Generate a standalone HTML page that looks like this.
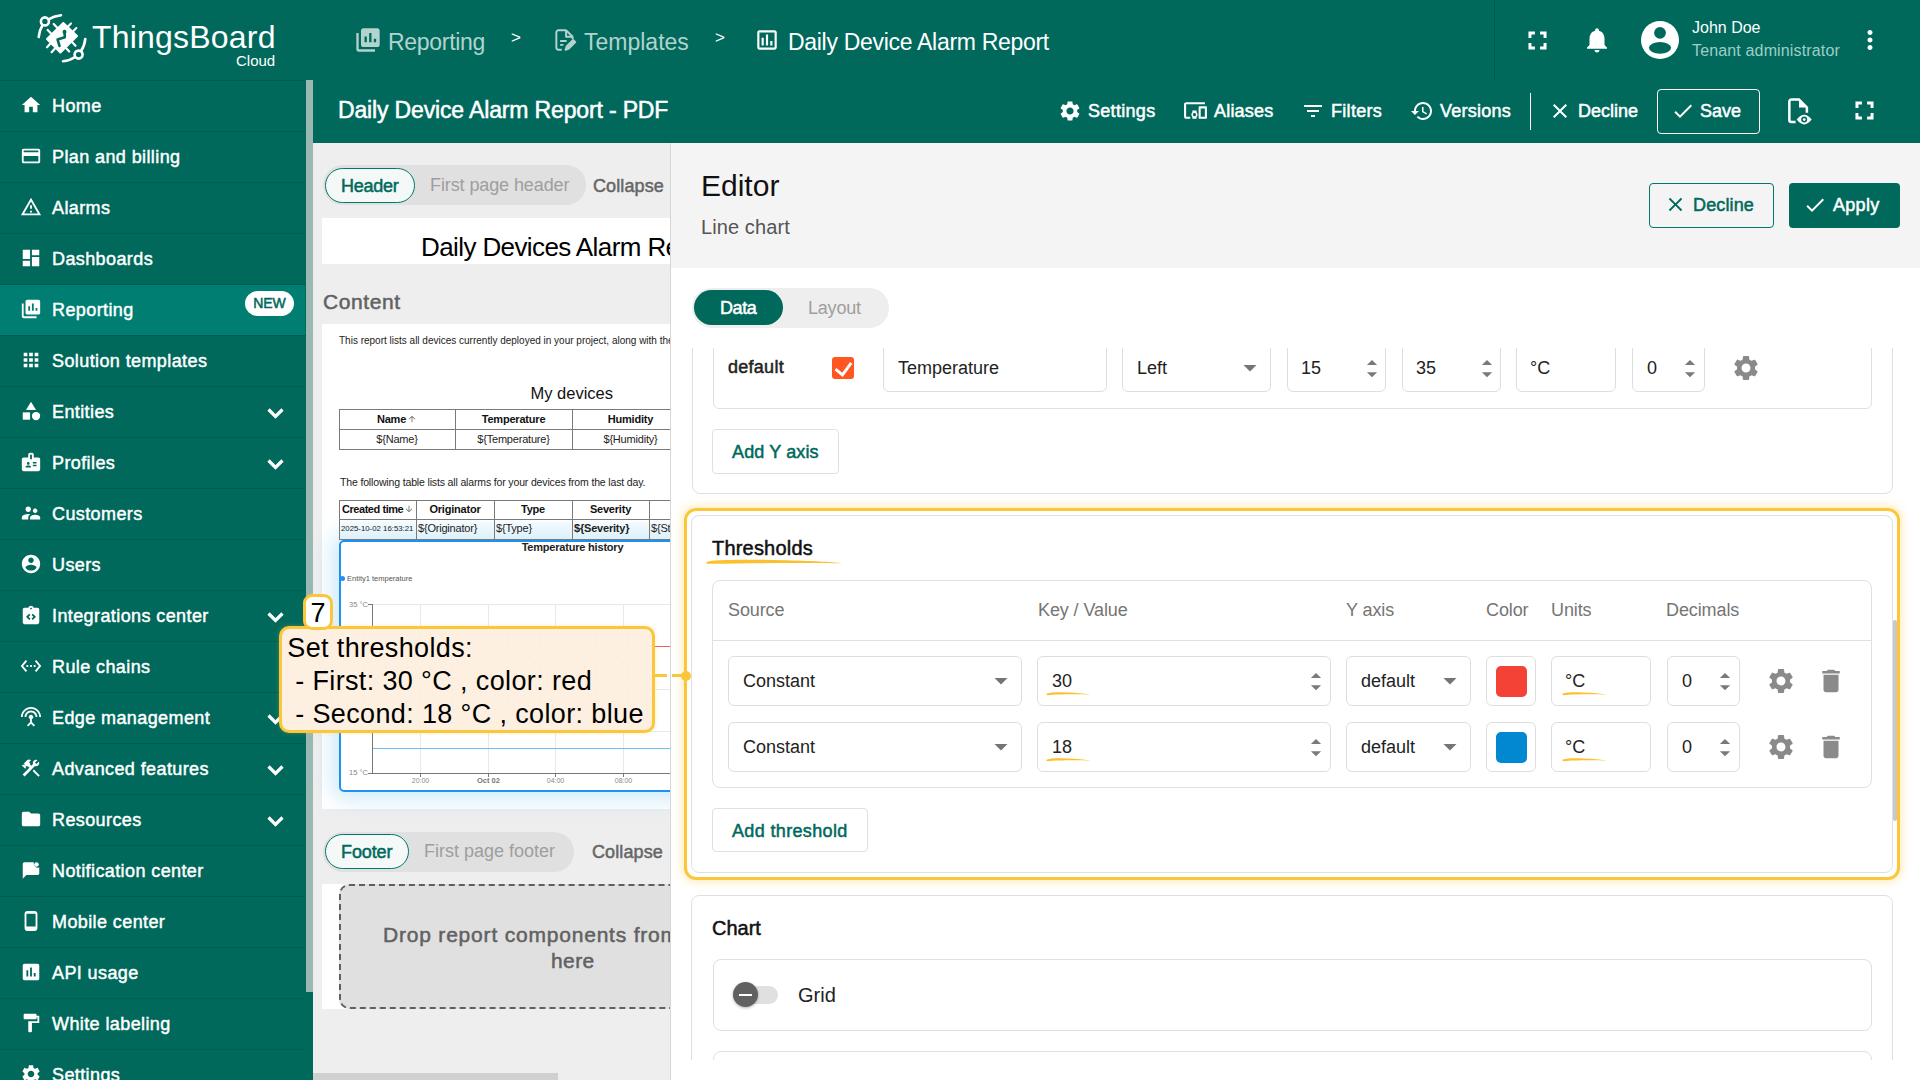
<!DOCTYPE html>
<html><head><meta charset="utf-8">
<style>
*{box-sizing:border-box;margin:0;padding:0}
html,body{width:1920px;height:1080px;overflow:hidden;background:#fff;font-family:"Liberation Sans",sans-serif}
.a{position:absolute}
.t{position:absolute;white-space:nowrap;line-height:1}
svg{position:absolute;display:block}
#top{left:0;top:0;width:1920px;height:143px;background:#00695c}
#side{left:0;top:0;width:313px;height:1080px;overflow:hidden}
#sidebg{left:0;top:80px;width:313px;height:1000px;background:#00695c}
.si{position:absolute;left:0;width:305px;height:51px;border-top:1px solid #005b50}
.si .t{left:52px;top:16px;font-size:18px;color:#fff;letter-spacing:0.4px;-webkit-text-stroke:0.45px currentColor;}
.si svg{left:20px;top:13px;width:22px;height:22px;fill:#fff}
.si .chev{left:264px;top:13px;width:24px;height:24px}
.w{fill:#fff}
.th{font-size:11px;font-weight:700;color:#111;text-align:center;letter-spacing:-0.2px}
.td{font-size:11px;color:#222;text-align:center;letter-spacing:-0.2px}
.card{position:absolute;border:1px solid #e0e0e0}
.inp{position:absolute;border:1.5px solid #dedede;border-radius:6px}
.b2{top:102px;font-size:18px;color:#fff;-webkit-text-stroke:0.5px currentColor;}
</style></head><body>
<!-- TOP BAR -->
<div id="top" class="a"></div>
<div class="a" style="left:1494px;top:0;width:1px;height:80px;background:#005a4f"></div>

<!-- logo -->
<svg style="left:36px;top:13px;width:52px;height:50px" viewBox="0 0 52 50" fill="none" stroke="#fff" stroke-width="2.6" stroke-linecap="round">
  <circle cx="8.9" cy="8.4" r="4"/>
  <path d="M12.5 6.3 Q17.5 3.2 25 2.2"/>
  <path d="M6.6 12 Q3.4 17 2.7 24"/>
  <circle cx="42.6" cy="41.6" r="4"/>
  <path d="M39 44 Q34 47.5 27 48.3"/>
  <path d="M45 38 Q48.5 33 49.3 26"/>
  <path d="M27.3 10 L41 23 L24.4 39.5 L11 26 Z" fill="#fff" stroke-width="2" stroke-linejoin="round"/>
  <path d="M17.7 11L21 14.5M11.7 17L15 20.5M35 10.5L31.5 14M40.3 15.1L36.5 19M39.5 32.8L36 29M33.2 38.5L30 35M11 34.3L14.5 30.5M15.6 39.2L19 35.5" stroke-width="2.2"/>
  <path d="M28.6 18 L28.8 24.3 L21.6 26.6 L23.5 33" stroke="#00695c" stroke-width="2.6" stroke-linejoin="round"/>
  <circle cx="28.5" cy="19" r="2" fill="#00695c" stroke="none"/>
</svg>
<div class="t" style="left:92px;top:21px;font-size:32px;color:#fff;letter-spacing:0.2px">ThingsBoard</div>
<div class="t" style="left:236px;top:53px;font-size:15px;color:#fff;">Cloud</div>

<!-- breadcrumb -->
<svg style="left:354px;top:26px;width:28px;height:28px" viewBox="0 0 24 24"><path fill="#b2d3ce" d="M4 6H2v14c0 1.1.9 2 2 2h14v-2H4V6zm16-4H8c-1.1 0-2 .9-2 2v12c0 1.1.9 2 2 2h12c1.1 0 2-.9 2-2V4c0-1.1-.9-2-2-2zm-9 12H9V9h2v5zm4 0h-2V6h2v8zm4 0h-2v-3h2v3z"/></svg>
<div class="t" style="left:388px;top:31px;font-size:23px;color:#b2d3ce;letter-spacing:-0.3px">Reporting</div>
<div class="t" style="left:511px;top:29px;font-size:17px;color:#fff;">&gt;</div>
<svg style="left:552px;top:27px;width:26px;height:26px" viewBox="0 0 24 24" fill="none" stroke="#b2d3ce" stroke-width="1.8" stroke-linejoin="round"><path d="M13 3H6a2 2 0 0 0-2 2v14a2 2 0 0 0 2 2h3"/><path d="M13 3l6 6v2"/><path d="M13 3v6h6"/><path d="M7.5 13h6M7.5 16.5h3"/><path d="M12.5 21l1-3 6-6 2 2-6 6z" fill="#b2d3ce"/></svg>
<div class="t" style="left:584px;top:31px;font-size:23px;color:#b2d3ce;">Templates</div>
<div class="t" style="left:715px;top:29px;font-size:17px;color:#fff;">&gt;</div>
<svg style="left:754px;top:27px;width:26px;height:26px" viewBox="0 0 24 24"><path fill="#fff" d="M19 3H5c-1.1 0-2 .9-2 2v14c0 1.1.9 2 2 2h14c1.1 0 2-.9 2-2V5c0-1.1-.9-2-2-2zm0 16H5V5h14v14zM7 10h2v7H7zm4-3h2v10h-2zm4 6h2v4h-2z"/></svg>
<div class="t" style="left:788px;top:31px;font-size:23px;color:#fff;letter-spacing:-0.3px">Daily Device Alarm Report</div>

<!-- right top icons -->
<svg style="left:1522px;top:24.5px;width:31px;height:31px" viewBox="0 0 24 24"><path class="w" d="M7.3 14H5v5h5v-2.3H7.3V14zM5 10h2.3V7.3H10V5H5v5zm11.7 6.7H14V19h5v-5h-2.3v2.7zM14 5v2.3h2.7V10H19V5h-5z"/></svg>
<svg style="left:1582px;top:25px;width:30px;height:30px" viewBox="0 0 24 24"><path class="w" d="M12 22c1.1 0 2-.9 2-2h-4c0 1.1.89 2 2 2zm6-6v-5c0-3.07-1.64-5.64-4.5-6.32V4c0-.83-.67-1.5-1.5-1.5s-1.5.67-1.5 1.5v.68C7.63 5.36 6 7.92 6 11v5l-2 2v1h16v-1l-2-2z"/></svg>
<svg style="left:1641px;top:21.2px;width:38px;height:38px" viewBox="0 0 38 38"><circle cx="19" cy="19" r="19" fill="#fff"/><circle cx="19" cy="11.85" r="5.9" fill="#00695c"/><ellipse cx="19" cy="26.8" rx="11.1" ry="5.9" fill="#00695c"/></svg>
<div class="t" style="left:1692px;top:20px;font-size:16px;color:#fff;">John Doe</div>
<div class="t" style="left:1692px;top:43px;font-size:16px;color:#9fcdc6;letter-spacing:0.15px">Tenant administrator</div>
<svg style="left:1855px;top:25px;width:30px;height:30px" viewBox="0 0 24 24"><path class="w" d="M12 8c1.1 0 2-.9 2-2s-.9-2-2-2-2 .9-2 2 .9 2 2 2zm0 2c-1.1 0-2 .9-2 2s.9 2 2 2 2-.9 2-2-.9-2-2-2zm0 6c-1.1 0-2 .9-2 2s.9 2 2 2 2-.9 2-2-.9-2-2-2z"/></svg>

<!-- SECOND BAR -->
<div class="t" style="left:338px;top:99px;font-size:23px;color:#fff;letter-spacing:-0.15px;-webkit-text-stroke:0.5px currentColor;">Daily Device Alarm Report - PDF</div>


<svg style="left:1058px;top:99px;width:24px;height:24px" viewBox="0 0 24 24"><path class="w" d="M19.14 12.94c.04-.3.06-.61.06-.94 0-.32-.02-.64-.07-.94l2.03-1.58c.18-.14.23-.41.12-.61l-1.92-3.32c-.12-.22-.37-.29-.59-.22l-2.39.96c-.5-.38-1.030-.7-1.62-.94l-.36-2.54c-.04-.24-.24-.41-.48-.41h-3.84c-.24 0-.43.17-.47.41l-.36 2.54c-.59.24-1.13.57-1.62.94l-2.39-.96c-.22-.08-.47 0-.59.22L2.74 8.87c-.12.21-.08.47.12.61l2.03 1.58c-.05.3-.09.63-.09.94s.02.64.07.94l-2.03 1.58c-.18.14-.23.41-.12.61l1.92 3.32c.12.22.37.29.59.22l2.39-.96c.5.38 1.03.7 1.62.94l.36 2.54c.05.24.24.41.48.41h3.84c.24 0 .44-.17.47-.41l.36-2.54c.59-.24 1.13-.56 1.62-.94l2.39.96c.22.08.47 0 .59-.22l1.92-3.32c.12-.22.07-.47-.12-.61l-2.01-1.58zM12 15.6c-1.98 0-3.6-1.62-3.6-3.6s1.62-3.6 3.6-3.6 3.6 1.62 3.6 3.6-1.62 3.6-3.6 3.6z"/></svg>
<div class="t b2" style="left:1088px;letter-spacing:0.3px">Settings</div>
<svg style="left:1183px;top:98px;width:25px;height:25px" viewBox="0 0 24 24"><path class="w" d="M3 6h18V4H3c-1.1 0-2 .9-2 2v12c0 1.1.9 2 2 2h4v-2H3V6zm10 6H9v1.78c-.61.55-1 1.33-1 2.22s.39 1.67 1 2.22V20h4v-1.78c.61-.55 1-1.34 1-2.22s-.39-1.67-1-2.22V12zm-2 5.5c-.83 0-1.5-.67-1.5-1.5s.67-1.5 1.5-1.5 1.5.67 1.5 1.5-.67 1.5-1.5 1.5zM22 8h-6c-.5 0-1 .5-1 1v10c0 .5.5 1 1 1h6c.5 0 1-.5 1-1V9c0-.5-.5-1-1-1zm-1 10h-4v-8h4v8z"/></svg>
<div class="t b2" style="left:1214px;letter-spacing:0.2px">Aliases</div>
<svg style="left:1301px;top:99px;width:24px;height:24px" viewBox="0 0 24 24"><path class="w" d="M10 18h4v-2h-4v2zM3 6v2h18V6H3zm3 7h12v-2H6v2z"/></svg>
<div class="t b2" style="left:1331px;letter-spacing:0.3px">Filters</div>
<svg style="left:1410px;top:99px;width:24px;height:24px" viewBox="0 0 24 24"><path class="w" d="M13 3c-4.97 0-9 4.03-9 9H1l3.89 3.89.07.14L9 12H6c0-3.87 3.13-7 7-7s7 3.13 7 7-3.13 7-7 7c-1.93 0-3.68-.79-4.94-2.06l-1.42 1.42C8.27 19.99 10.51 21 13 21c4.97 0 9-4.03 9-9s-4.03-9-9-9zm-1 5v5l4.28 2.54.72-1.21-3.5-2.08V8H12z"/></svg>
<div class="t b2" style="left:1440px;letter-spacing:0.25px">Versions</div>
<div class="a" style="left:1530px;top:93px;width:1px;height:37px;background:#fff"></div>
<svg style="left:1548px;top:99px;width:24px;height:24px" viewBox="0 0 24 24"><path class="w" d="M19 6.41L17.59 5 12 10.59 6.41 5 5 6.41 10.59 12 5 17.59 6.41 19 12 13.41 17.59 19 19 17.59 13.41 12z"/></svg>
<div class="t b2" style="left:1578px;letter-spacing:0.0px">Decline</div>
<div class="a" style="left:1657px;top:89px;width:103px;height:45px;border:1.5px solid #fff;border-radius:4px"></div>
<svg style="left:1671px;top:99px;width:24px;height:24px" viewBox="0 0 24 24"><path class="w" d="M9 16.17L4.83 12l-1.42 1.42L9 19 21 7l-1.41-1.41z"/></svg>
<div class="t b2" style="left:1700px;letter-spacing:0.0px">Save</div>
<svg style="left:1784px;top:96px;width:30px;height:30px" viewBox="0 0 30 30"><path d="M11.6 26H7.35a2 2 0 0 1-2-2V5.5a2 2 0 0 1 2-2H15l7.9 7.9v5.4" fill="none" stroke="#fff" stroke-width="2.5"/><path d="M15 3.5V11.4H22.9z" fill="#fff"/><path d="M12.7 23.6Q20.2 14 27.7 23.6Q20.2 33.2 12.7 23.6z" fill="#fff"/><circle cx="20.2" cy="23.6" r="3" fill="#00695c"/><circle cx="20.2" cy="23.6" r="1.4" fill="#fff"/></svg>
<svg style="left:1849px;top:95px;width:31px;height:31px" viewBox="0 0 24 24"><path class="w" d="M7.3 14H5v5h5v-2.3H7.3V14zM5 10h2.3V7.3H10V5H5v5zm11.7 6.7H14V19h5v-5h-2.3v2.7zM14 5v2.3h2.7V10H19V5h-5z"/></svg>

<!--SIDEBAR-->
<div id="sidebg" class="a"></div>
<div id="side" class="a">
<div class="si" style="top:80px"><svg viewBox="0 0 24 24"><path d="M10 20v-6h4v6h5v-8h3L12 3 2 12h3v8z"/></svg><div class="t">Home</div></div>
<div class="si" style="top:131px"><svg viewBox="0 0 24 24"><path d="M20 4H4c-1.11 0-1.99.89-1.99 2L2 18c0 1.11.89 2 2 2h16c1.11 0 2-.89 2-2V6c0-1.11-.89-2-2-2zm0 14H4v-6h16v6zm0-10H4V6h16v2z"/></svg><div class="t">Plan and billing</div></div>
<div class="si" style="top:182px"><svg viewBox="0 0 24 24"><path d="M12 5.99L19.53 19H4.47L12 5.99M12 2L1 21h22L12 2zm1 14h-2v2h2v-2zm0-6h-2v4h2v-4z"/></svg><div class="t">Alarms</div></div>
<div class="si" style="top:233px"><svg viewBox="0 0 24 24"><path d="M3 13h8V3H3v10zm0 8h8v-6H3v6zm10 0h8V11h-8v10zm0-18v6h8V3h-8z"/></svg><div class="t">Dashboards</div></div>
<div class="si" style="top:284px;background:#007e72"><svg viewBox="0 0 24 24"><path d="M4 6H2v14c0 1.1.9 2 2 2h14v-2H4V6zm16-4H8c-1.1 0-2 .9-2 2v12c0 1.1.9 2 2 2h12c1.1 0 2-.9 2-2V4c0-1.1-.9-2-2-2zm-9 12H9V9h2v5zm4 0h-2V6h2v8zm4 0h-2v-3h2v3z"/></svg><div class="t">Reporting</div><div class="a" style="left:245px;top:6px;width:49px;height:25px;border-radius:13px;background:#fff;color:#00695c;font-size:14px;line-height:25px;text-align:center;-webkit-text-stroke:0.5px currentColor;">NEW</div></div>
<div class="si" style="top:335px"><svg viewBox="0 0 24 24"><path d="M4 8h4V4H4v4zm6 12h4v-4h-4v4zm-6 0h4v-4H4v4zm0-6h4v-4H4v4zm6 0h4v-4h-4v4zm6-10v4h4V4h-4zm-6 4h4V4h-4v4zm6 6h4v-4h-4v4zm0 6h4v-4h-4v4z"/></svg><div class="t">Solution templates</div></div>
<div class="si" style="top:386px"><svg viewBox="0 0 24 24"><path d="M12 2l-5.5 9h11z"/><circle cx="17.5" cy="17.5" r="4.5"/><path d="M3 13.5h8v8H3z"/></svg><div class="t">Entities</div><svg class="chev" viewBox="0 0 24 24"><path fill="none" stroke="#fff" stroke-width="3.2" d="M4.5 9.5l7 7 7-7"/></svg></div>
<div class="si" style="top:437px"><svg viewBox="0 0 24 24"><path d="M20 7h-5V4c0-1.1-.9-2-2-2h-2c-1.1 0-2 .9-2 2v3H4c-1.1 0-2 .9-2 2v11c0 1.1.9 2 2 2h16c1.1 0 2-.9 2-2V9c0-1.1-.9-2-2-2zM9 12c.83 0 1.5.67 1.5 1.5S9.83 15 9 15s-1.5-.67-1.5-1.5S8.17 12 9 12zm3 6H6v-.75c0-1 2-1.5 3-1.5s3 .5 3 1.5V18zm1-9h-2V4h2v5zm5 7.5h-4V15h4v1.5zm0-3h-4V12h4v1.5z"/></svg><div class="t">Profiles</div><svg class="chev" viewBox="0 0 24 24"><path fill="none" stroke="#fff" stroke-width="3.2" d="M4.5 9.5l7 7 7-7"/></svg></div>
<div class="si" style="top:488px"><svg viewBox="0 0 24 24"><path d="M16.5 12c1.38 0 2.49-1.12 2.49-2.5S17.88 7 16.5 7C15.12 7 14 8.12 14 9.5s1.12 2.5 2.5 2.5zM9 11c1.66 0 2.99-1.34 2.99-3S10.66 5 9 5C7.34 5 6 6.34 6 8s1.34 3 3 3zm7.5 3c-1.83 0-5.5.92-5.5 2.75V19h11v-2.25c0-1.83-3.67-2.75-5.5-2.75zM9 13c-2.33 0-7 1.17-7 3.5V19h7v-2.25c0-.85.33-2.34 2.37-3.47C10.5 13.1 9.66 13 9 13z"/></svg><div class="t">Customers</div></div>
<div class="si" style="top:539px"><svg viewBox="0 0 24 24"><path d="M12 2C6.48 2 2 6.48 2 12s4.48 10 10 10 10-4.48 10-10S17.52 2 12 2zm0 3c1.66 0 3 1.34 3 3s-1.34 3-3 3-3-1.34-3-3 1.34-3 3-3zm0 14.2c-2.5 0-4.71-1.28-6-3.22.03-1.99 4-3.08 6-3.08 1.99 0 5.97 1.09 6 3.08-1.29 1.94-3.5 3.22-6 3.22z"/></svg><div class="t">Users</div></div>
<div class="si" style="top:590px"><svg viewBox="0 0 24 24"><path d="M19 4h-4.18C14.4 2.84 13.3 2 12 2S9.6 2.84 9.18 4H5c-1.1 0-2 .9-2 2v14c0 1.1.9 2 2 2h14c1.1 0 2-.9 2-2V6c0-1.1-.9-2-2-2zm-7 0c.55 0 1 .45 1 1s-.45 1-1 1-1-.45-1-1 .45-1 1-1zm-2 13.4L6.6 14 10 10.6l1.4 1.4-2 2 2 2L10 17.4zm4 0L12.6 16l2-2-2-2 1.4-1.4 3.4 3.4-3.4 3.4z"/></svg><div class="t">Integrations center</div><svg class="chev" viewBox="0 0 24 24"><path fill="none" stroke="#fff" stroke-width="3.2" d="M4.5 9.5l7 7 7-7"/></svg></div>
<div class="si" style="top:641px"><svg viewBox="0 0 24 24"><path d="M7.77 6.76L6.23 5.48.82 12l5.41 6.52 1.54-1.28L3.42 12l4.35-5.24zM7 13h2v-2H7v2zm10-2h-2v2h2v-2zm-6 2h2v-2h-2v2zm6.77-7.52l-1.54 1.28L20.58 12l-4.35 5.24 1.54 1.28L23.18 12l-5.41-6.52z"/></svg><div class="t">Rule chains</div></div>
<div class="si" style="top:692px"><svg viewBox="0 0 24 24"><path d="M12 5c-3.87 0-7 3.13-7 7h2c0-2.76 2.24-5 5-5s5 2.24 5 5h2c0-3.87-3.13-7-7-7zm1 9.29c.88-.39 1.5-1.26 1.5-2.29 0-1.38-1.12-2.5-2.5-2.5S9.5 10.62 9.5 12c0 1.02.62 1.9 1.5 2.29v3.3L7.59 21 9 22.41l3-3 3 3L16.41 21 13 17.59v-3.3zM12 1C5.93 1 1 5.93 1 12h2c0-4.97 4.03-9 9-9s9 4.03 9 9h2c0-6.07-4.93-11-11-11z"/></svg><div class="t">Edge management</div><svg class="chev" viewBox="0 0 24 24"><path fill="none" stroke="#fff" stroke-width="3.2" d="M4.5 9.5l7 7 7-7"/></svg></div>
<div class="si" style="top:743px"><svg viewBox="0 0 24 24"><path d="M13.78 15.17l1.42-1.41 6.36 6.36-1.41 1.41zM17.5 10c1.93 0 3.5-1.57 3.5-3.5 0-.58-.16-1.12-.41-1.59l-2.7 2.7-1.49-1.49 2.7-2.7C18.62 3.16 18.08 3 17.5 3 15.57 3 14 4.57 14 6.5c0 .41.08.8.21 1.16l-1.85 1.85-1.78-1.78.71-.71-1.41-1.41L12 3.49c-1.17-1.17-3.07-1.17-4.24 0L4.22 7.03l1.41 1.41H2.81l-.71.71 3.54 3.54.71-.71V9.15l1.41 1.41.71-.71 1.78 1.78-7.41 7.41 2.12 2.12L16.34 9.79c.36.13.75.21 1.16.21z"/></svg><div class="t">Advanced features</div><svg class="chev" viewBox="0 0 24 24"><path fill="none" stroke="#fff" stroke-width="3.2" d="M4.5 9.5l7 7 7-7"/></svg></div>
<div class="si" style="top:794px"><svg viewBox="0 0 24 24"><path d="M10 4H4c-1.1 0-1.99.9-1.99 2L2 18c0 1.1.9 2 2 2h16c1.1 0 2-.9 2-2V8c0-1.1-.9-2-2-2h-8l-2-2z"/></svg><div class="t">Resources</div><svg class="chev" viewBox="0 0 24 24"><path fill="none" stroke="#fff" stroke-width="3.2" d="M4.5 9.5l7 7 7-7"/></svg></div>
<div class="si" style="top:845px"><svg viewBox="0 0 24 24"><path d="M18 8.5c1.38 0 2.5-1.12 2.5-2.5S19.38 3.5 18 3.5 15.5 4.62 15.5 6 16.62 8.5 18 8.5z"/><path d="M20 10.3V16c0 1.1-.9 2-2 2H6l-4 4V6c0-1.1.9-2 2-2h10.1c-.06.32-.1.66-.1 1 0 2.76 2.24 5 5 5 .36 0 .69-.04 1-.1z" transform="translate(1 -0.5)"/></svg><div class="t">Notification center</div></div>
<div class="si" style="top:896px"><svg viewBox="0 0 24 24"><path d="M16 1H8C6.34 1 5 2.34 5 4v16c0 1.66 1.34 3 3 3h8c1.66 0 3-1.34 3-3V4c0-1.66-1.34-3-3-3zm1 17H7V4h10v14z" transform="translate(0 0)"/></svg><div class="t">Mobile center</div></div>
<div class="si" style="top:947px"><svg viewBox="0 0 24 24"><path d="M19 3H5c-1.1 0-2 .9-2 2v14c0 1.1.9 2 2 2h14c1.1 0 2-.9 2-2V5c0-1.1-.9-2-2-2zM9 17H7v-7h2v7zm4 0h-2V7h2v10zm4 0h-2v-4h2v4z"/></svg><div class="t">API usage</div></div>
<div class="si" style="top:998px"><svg viewBox="0 0 24 24"><path d="M18 4V3c0-.55-.45-1-1-1H5c-.55 0-1 .45-1 1v4c0 .55.45 1 1 1h12c.55 0 1-.45 1-1V6h1v4H9v11c0 .55.45 1 1 1h2c.55 0 1-.45 1-1v-9h8V4h-3z"/></svg><div class="t">White labeling</div></div>
<div class="si" style="top:1049px"><svg viewBox="0 0 24 24"><path d="M19.14 12.94c.04-.3.06-.61.06-.94 0-.32-.02-.64-.07-.94l2.03-1.58c.18-.14.23-.41.12-.61l-1.92-3.32c-.12-.22-.37-.29-.59-.22l-2.39.96c-.5-.38-1.03-.7-1.62-.94l-.36-2.54c-.04-.24-.24-.41-.48-.41h-3.84c-.24 0-.43.17-.47.41l-.36 2.54c-.59.24-1.13.57-1.62.94l-2.39-.96c-.22-.08-.47 0-.59.22L2.74 8.87c-.12.21-.08.47.12.61l2.03 1.58c-.05.3-.09.63-.09.94s.02.64.07.94l-2.03 1.58c-.18.14-.23.41-.12.61l1.92 3.32c.12.22.37.29.59.22l2.39-.96c.5.38 1.03.7 1.62.94l.36 2.54c.05.24.24.41.48.41h3.84c.24 0 .44-.17.47-.41l.36-2.54c.59-.24 1.13-.56 1.62-.94l2.39.96c.22.08.47 0 .59-.22l1.92-3.32c.12-.22.07-.47-.12-.61l-2.01-1.58zM12 15.6c-1.98 0-3.6-1.62-3.6-3.6s1.62-3.6 3.6-3.6 3.6 1.62 3.6 3.6-1.62 3.6-3.6 3.6z"/></svg><div class="t">Settings</div></div>
<div class="a" style="left:305px;top:80px;width:8px;height:1000px;background:#00695c"></div>
<div class="a" style="left:306px;top:80px;width:7px;height:912px;background:#9bb8b3"></div>
</div>

<!--LEFTPANEL-->
<div class="a" style="left:313px;top:143px;width:358px;height:937px;background:#eeeeee"></div>
<div class="a" style="left:0;top:0;width:670px;height:1080px;overflow:hidden">
  <!-- header toggle -->
  <div class="a" style="left:323px;top:165px;width:263px;height:40px;border-radius:20px;background:#e0e0e0"></div>
  <div class="a" style="left:325px;top:168px;width:90px;height:35px;border-radius:18px;background:#f4f8f7;border:1.5px solid #00796b"></div>
  <div class="t" style="left:341px;top:177px;font-size:18px;color:#00695c;letter-spacing:-0.25px;-webkit-text-stroke:0.5px currentColor;">Header</div>
  <div class="t" style="left:430px;top:176px;font-size:18px;color:#9e9e9e;letter-spacing:-0.1px">First page header</div>
  <div class="t" style="left:593px;top:177px;font-size:18px;color:#666;letter-spacing:0.12px;-webkit-text-stroke:0.5px currentColor;">Collapse</div>
  <!-- header box -->
  <div class="a" style="left:322px;top:218px;width:500px;height:46px;background:#fff"></div>
  <div class="t" style="left:421px;top:234px;font-size:26px;color:#000;letter-spacing:-0.6px">Daily Devices Alarm Report</div>
  <div class="t" style="left:323px;top:291px;font-size:21px;color:#616161;letter-spacing:0.6px;-webkit-text-stroke:0.5px currentColor;">Content</div>
  <!-- report page -->
  <div class="a" style="left:322px;top:324px;width:500px;height:485px;background:#fff"></div>
  <div class="t" style="left:339px;top:336px;font-size:10px;color:#222;">This report lists all devices currently deployed in your project, along with their latest telemetry values.</div>
  <div class="t" style="left:530.5px;top:384.5px;font-size:16.5px;color:#111;">My devices</div>
  <div class="a" style="left:339px;top:409px;width:467px;height:41px;border:1px solid #7a7a7a"></div>
  <div class="a" style="left:339px;top:429px;width:467px;height:1px;background:#7a7a7a"></div>
  <div class="a" style="left:455px;top:409px;width:1px;height:41px;background:#7a7a7a"></div>
  <div class="a" style="left:572px;top:409px;width:1px;height:41px;background:#7a7a7a"></div>
  <div class="a" style="left:689px;top:409px;width:1px;height:41px;background:#7a7a7a"></div>
  <div class="t th" style="left:339px;top:414px;width:116px">Name<svg style="position:relative;display:inline-block;width:10px;height:10px;vertical-align:-1px;margin-left:1px" viewBox="0 0 24 24"><path fill="#707070" d="M4 12l1.41 1.41L11 7.83V20h2V7.83l5.58 5.59L20 12l-8-8-8 8z"/></svg></div>
  <div class="t th" style="left:455px;top:414px;width:117px">Temperature</div>
  <div class="t th" style="left:572px;top:414px;width:117px">Humidity</div>
  <div class="t td" style="left:339px;top:434px;width:116px">${Name}</div>
  <div class="t td" style="left:455px;top:434px;width:117px">${Temperature}</div>
  <div class="t td" style="left:572px;top:434px;width:117px">${Humidity}</div>
  <div class="t" style="left:340px;top:477px;font-size:10.5px;color:#222;letter-spacing:-0.15px">The following table lists all alarms for your devices from the last day.</div>
  <!-- glow -->
  <div class="a" style="left:339px;top:540px;width:467px;height:252px;border-radius:5px;box-shadow:0 0 22px 6px rgba(100,190,240,0.35)"></div>
  <div class="a" style="left:339px;top:500px;width:467px;height:40px;border:1px solid #7a7a7a;border-bottom:none;background:linear-gradient(#fff 0,#fff 19px,#f2fafe 22px,#d9f0fb 40px)"></div>
  <div class="a" style="left:339px;top:519px;width:467px;height:1px;background:#7a7a7a"></div>
  <div class="a" style="left:416px;top:500px;width:1px;height:40px;background:#7a7a7a"></div>
  <div class="a" style="left:494px;top:500px;width:1px;height:40px;background:#7a7a7a"></div>
  <div class="a" style="left:572px;top:500px;width:1px;height:40px;background:#7a7a7a"></div>
  <div class="a" style="left:649px;top:500px;width:1px;height:40px;background:#7a7a7a"></div>
  <div class="t th" style="left:342px;top:504px;text-align:left;letter-spacing:-0.45px">Created time<svg style="position:relative;display:inline-block;width:10px;height:10px;vertical-align:-1px;margin-left:1px" viewBox="0 0 24 24"><path fill="#707070" d="M20 12l-1.41-1.41L13 16.17V4h-2v12.17l-5.58-5.59L4 12l8 8 8-8z"/></svg></div>
  <div class="t th" style="left:416px;top:504px;width:78px">Originator</div>
  <div class="t th" style="left:494px;top:504px;width:78px">Type</div>
  <div class="t th" style="left:572px;top:504px;width:77px">Severity</div>
  <div class="t td" style="left:341px;top:525px;font-size:7.8px;text-align:left;letter-spacing:0px">2025-10-02 16:53:21</div>
  <div class="a" style="left:339px;top:539px;width:467px;height:1px;background:#7a7a7a"></div>
  <div class="t td" style="left:418px;top:523px;text-align:left">${Originator}</div>
  <div class="t td" style="left:496px;top:523px;text-align:left">${Type}</div>
  <div class="t td" style="left:574px;top:523px;text-align:left;font-weight:700">${Severity}</div>
  <div class="t td" style="left:651px;top:523px;text-align:left">${Status}</div>
  <!-- chart -->
  <div class="a" style="left:339px;top:540px;width:467px;height:252px;border:2px solid #1e90f0;border-radius:5px;background:#fff"></div>
  <div class="t" style="left:339px;top:542px;width:467px;text-align:center;font-size:11px;font-weight:700;color:#222;letter-spacing:-0.2px">Temperature history</div>
  <div class="a" style="left:340px;top:576px;width:5px;height:5px;border-radius:50%;background:#1e90f0"></div>
  <div class="t" style="left:347px;top:575px;font-size:7.5px;color:#555">Entity1 temperature</div>
  <div class="t" style="left:349px;top:601px;font-size:7.5px;color:#888">35 &#176;C</div>
  <div class="t" style="left:349px;top:769px;font-size:7.5px;color:#888">15 &#176;C</div>
  <div class="a" style="left:373px;top:604px;width:433px;height:1px;background:#e8e8e8"></div>
  <div class="a" style="left:373px;top:689px;width:433px;height:1px;background:#e8e8e8"></div>
  <div class="a" style="left:373px;top:731px;width:433px;height:1px;background:#e8e8e8"></div>
  <div class="a" style="left:420px;top:604px;width:1px;height:170px;background:#e8e8e8"></div>
  <div class="a" style="left:488px;top:604px;width:1px;height:170px;background:#e8e8e8"></div>
  <div class="a" style="left:555px;top:604px;width:1px;height:170px;background:#e8e8e8"></div>
  <div class="a" style="left:623px;top:604px;width:1px;height:170px;background:#e8e8e8"></div>
  <div class="a" style="left:373px;top:646px;width:433px;height:1px;background:#f06060"></div>
  <div class="a" style="left:373px;top:747.5px;width:433px;height:1.2px;background:#6cbcef"></div>
  <div class="a" style="left:372px;top:604px;width:1px;height:170px;background:#777"></div>
  <div class="a" style="left:368px;top:604px;width:5px;height:1px;background:#777"></div>
  <div class="a" style="left:368px;top:773px;width:5px;height:1px;background:#777"></div>
  <div class="a" style="left:372px;top:773px;width:434px;height:1px;background:#777"></div><div class="a" style="left:420px;top:773px;width:1px;height:4px;background:#777"></div><div class="a" style="left:488px;top:773px;width:1px;height:4px;background:#777"></div><div class="a" style="left:555px;top:773px;width:1px;height:4px;background:#777"></div><div class="a" style="left:623px;top:773px;width:1px;height:4px;background:#777"></div>
  <div class="t" style="left:400px;top:777px;width:41px;text-align:center;font-size:7px;color:#888">20:00</div>
  <div class="t" style="left:468px;top:777px;width:41px;text-align:center;font-size:7.5px;font-weight:700;color:#777">Oct 02</div>
  <div class="t" style="left:535px;top:777px;width:41px;text-align:center;font-size:7px;color:#888">04:00</div>
  <div class="t" style="left:603px;top:777px;width:41px;text-align:center;font-size:7px;color:#888">08:00</div>
  <!-- footer -->
  <div class="a" style="left:323px;top:832px;width:251px;height:40px;border-radius:20px;background:#e0e0e0"></div>
  <div class="a" style="left:325px;top:834px;width:84px;height:35px;border-radius:18px;background:#f4f8f7;border:1.5px solid #00796b"></div>
  <div class="t" style="left:341px;top:843px;font-size:18px;color:#00695c;letter-spacing:-0.1px;-webkit-text-stroke:0.5px currentColor;">Footer</div>
  <div class="t" style="left:424px;top:842px;font-size:18px;color:#9e9e9e;">First page footer</div>
  <div class="t" style="left:592px;top:843px;font-size:18px;color:#666;letter-spacing:0.12px;-webkit-text-stroke:0.5px currentColor;">Collapse</div>
  <div class="a" style="left:322px;top:884px;width:500px;height:125px;background:#fff"></div>
  <div class="a" style="left:339px;top:884px;width:466px;height:125px;background:#e0e0e0;border:2px dashed #5f5f5f;border-radius:10px"></div>
  <div class="t" style="left:383px;top:924px;font-size:21px;color:#616161;letter-spacing:0.8px;-webkit-text-stroke:0.5px currentColor;">Drop report components from the toolbox</div>
  <div class="t" style="left:551px;top:950px;font-size:21px;color:#616161;letter-spacing:0.4px;-webkit-text-stroke:0.5px currentColor;">here</div>
  <div class="a" style="left:313px;top:1073px;width:245px;height:7px;background:#d0d0d0"></div>
</div>
<div class="a" style="left:670px;top:143px;width:1px;height:937px;background:#d6d6d6"></div>


<!--EDITOR-->
<div class="a" style="left:671px;top:143px;width:1249px;height:125px;background:#f4f4f4"></div>
<div class="t" style="left:701px;top:171.3px;font-size:30px;color:#111">Editor</div>
<div class="t" style="left:701px;top:216.6px;font-size:20px;color:#555;letter-spacing:0.1px">Line chart</div>
<div class="a" style="left:1649px;top:183px;width:125px;height:45px;border:1.5px solid #00796b;border-radius:4px"></div>
<svg style="left:1664px;top:193px;width:23px;height:23px" viewBox="0 0 24 24"><path fill="#00695c" d="M19 6.41L17.59 5 12 10.59 6.41 5 5 6.41 10.59 12 5 17.59 6.41 19 12 13.41 17.59 19 19 17.59 13.41 12z"/></svg>
<div class="t" style="left:1693px;top:195.5px;font-size:18px;color:#00695c;letter-spacing:0.14px;-webkit-text-stroke:0.5px currentColor;">Decline</div>
<div class="a" style="left:1789px;top:183px;width:111px;height:45px;background:#00695c;border-radius:4px"></div>
<svg style="left:1803px;top:193px;width:24px;height:24px" viewBox="0 0 24 24"><path fill="#fff" d="M9 16.17L4.83 12l-1.42 1.42L9 19 21 7l-1.41-1.41z"/></svg>
<div class="t" style="left:1833px;top:195.5px;font-size:18px;color:#fff;letter-spacing:0.3px;-webkit-text-stroke:0.5px currentColor;">Apply</div>
<div class="a" style="left:692px;top:288px;width:197px;height:40px;border-radius:20px;background:#eeeeee"></div>
<div class="a" style="left:694px;top:290px;width:89px;height:35px;border-radius:18px;background:#00695c"></div>
<div class="t" style="left:720px;top:298.8px;font-size:18px;color:#fff;letter-spacing:-0.4px;-webkit-text-stroke:0.5px currentColor;">Data</div>
<div class="t" style="left:808px;top:298.8px;font-size:18px;color:#9e9e9e;letter-spacing:-0.2px">Layout</div>
<div class="a" style="left:671px;top:348px;width:1249px;height:712px;overflow:hidden">
<div class="card" style="left:21px;top:-48px;width:1201px;height:194px;border-radius:8px;"></div>
<div class="card" style="left:42px;top:-28px;width:1159px;height:89px;border-radius:6px;"></div>
<div class="t" style="left:57px;top:9.6px;font-size:18px;color:#222;letter-spacing:0.27px;-webkit-text-stroke:0.5px currentColor;">default</div>
<div class="a" style="left:161px;top:9px;width:22px;height:22px;border-radius:3px;background:#ff5722"></div>
<svg style="left:161px;top:9px;width:22px;height:22px" viewBox="0 0 24 24"><path fill="none" stroke="#fff" stroke-width="3.2" d="M3.8 13.2L11.4 19.4 21 6.4"/></svg>
<div class="inp" style="left:212px;top:-28px;width:224px;height:72px"></div>
<div class="t" style="left:227px;top:10.8px;font-size:18px;color:#222">Temperature</div>
<div class="inp" style="left:451px;top:-28px;width:149px;height:72px"></div>
<div class="t" style="left:466px;top:10.8px;font-size:18px;color:#222">Left</div>
<svg style="left:572px;top:16px;width:14px;height:8px" viewBox="0 14 8"><path fill="#757575" d="M0.5 1L7 7.5 13.5 1z"/></svg>
<div class="inp" style="left:616px;top:-28px;width:99px;height:72px"></div>
<div class="t" style="left:630px;top:10.8px;font-size:18px;color:#222">15</div>
<svg style="left:695px;top:9px;width:12px;height:22px" viewBox="0 12 22"><path fill="#7a7a7a" d="M0.9 7.9L6 2.9 11.1 7.9zM0.9 15.2L6 20.2 11.1 15.2z"/></svg>
<div class="inp" style="left:731px;top:-28px;width:99px;height:72px"></div>
<div class="t" style="left:745px;top:10.8px;font-size:18px;color:#222">35</div>
<svg style="left:810px;top:9px;width:12px;height:22px" viewBox="0 12 22"><path fill="#7a7a7a" d="M0.9 7.9L6 2.9 11.1 7.9zM0.9 15.2L6 20.2 11.1 15.2z"/></svg>
<div class="inp" style="left:845px;top:-28px;width:100px;height:72px"></div>
<div class="t" style="left:859px;top:10.8px;font-size:18px;color:#222">&#176;C</div>
<div class="inp" style="left:961px;top:-28px;width:73px;height:72px"></div>
<div class="t" style="left:976px;top:10.8px;font-size:18px;color:#222">0</div>
<svg style="left:1013px;top:9px;width:12px;height:22px" viewBox="0 12 22"><path fill="#7a7a7a" d="M0.9 7.9L6 2.9 11.1 7.9zM0.9 15.2L6 20.2 11.1 15.2z"/></svg>
<svg style="left:1060px;top:5px;width:30px;height:30px" viewBox="0 0 24 24"><path fill="#8a8a8a" d="M19.14 12.94c.04-.3.06-.61.06-.94 0-.32-.02-.64-.07-.94l2.03-1.58c.18-.14.23-.41.12-.61l-1.92-3.32c-.12-.22-.37-.29-.59-.22l-2.39.96c-.5-.38-1.03-.7-1.62-.94l-.36-2.54c-.04-.24-.24-.41-.48-.41h-3.84c-.24 0-.43.17-.47.41l-.36 2.54c-.59.24-1.13.57-1.62.94l-2.39-.96c-.22-.08-.47 0-.59.22L2.74 8.87c-.12.21-.08.47.12.61l2.03 1.58c-.05.3-.09.63-.09.94s.02.64.07.94l-2.03 1.58c-.18.14-.23.41-.12.61l1.92 3.32c.12.22.37.29.59.22l2.39-.96c.5.38 1.03.7 1.62.94l.36 2.54c.05.24.24.41.48.41h3.84c.24 0 .44-.17.47-.41l.36-2.54c.59-.24 1.13-.56 1.62-.94l2.39.96c.22.08.47 0 .59-.22l1.92-3.32c.12-.22.07-.47-.12-.61l-2.01-1.58zM12 15.6c-1.98 0-3.6-1.62-3.6-3.6s1.62-3.6 3.6-3.6 3.6 1.62 3.6 3.6-1.62 3.6-3.6 3.6z"/></svg>
<div class="card" style="left:41px;top:81px;width:127px;height:45px;border-radius:4px;"></div>
<div class="t" style="left:61px;top:94.8px;font-size:18px;color:#00695c;letter-spacing:0.13px;-webkit-text-stroke:0.5px currentColor;">Add Y axis</div>
<div class="card" style="left:20px;top:167px;width:1202px;height:358px;border-radius:8px;"></div>
<div class="t" style="left:41px;top:189.8px;font-size:20px;color:#111;letter-spacing:0.2px;-webkit-text-stroke:0.5px currentColor;">Thresholds</div>
<svg style="left:35px;top:210px;width:137px;height:7px" viewBox="0 137 7"><path fill="#fbc02d" d="M1 4 C 3 1.5, 40 1.2, 80 2.2 C 110 3, 130 4.2, 136 5.2 C 120 5.4, 60 4.6, 4 5.8 C 0 6, -1 5, 1 4z"/></svg>
<div class="card" style="left:41px;top:232px;width:1160px;height:208px;border-radius:8px;"></div>
<div class="a" style="left:42px;top:292px;width:1159px;height:1px;background:#e0e0e0"></div>
<div class="t" style="left:57px;top:252.6px;font-size:18px;color:#757575;letter-spacing:-0.1px">Source</div>
<div class="t" style="left:367px;top:252.6px;font-size:18px;color:#757575;letter-spacing:-0.1px">Key / Value</div>
<div class="t" style="left:675px;top:252.6px;font-size:18px;color:#757575;letter-spacing:-0.1px">Y axis</div>
<div class="t" style="left:815px;top:252.6px;font-size:18px;color:#757575;letter-spacing:-0.1px">Color</div>
<div class="t" style="left:880px;top:252.6px;font-size:18px;color:#757575;letter-spacing:-0.1px">Units</div>
<div class="t" style="left:995px;top:252.6px;font-size:18px;color:#757575;letter-spacing:-0.1px">Decimals</div>
<div class="inp" style="left:57px;top:308px;width:294px;height:50px"></div>
<div class="t" style="left:72px;top:324.3px;font-size:18px;color:#222">Constant</div>
<svg style="left:323px;top:329.0px;width:14px;height:8px" viewBox="0 14 8"><path fill="#757575" d="M0.5 1L7 7.5 13.5 1z"/></svg>
<div class="inp" style="left:366px;top:308px;width:294px;height:50px"></div>
<div class="t" style="left:381px;top:324.3px;font-size:18px;color:#222">30</div>
<svg style="left:375px;top:342.5px;width:46px;height:5px" viewBox="0 46 5"><path fill="#fbc02d" d="M1 2.5 C 6 0.8, 25 0.8, 45 3.6 C 30 3, 10 3.2, 2 4.2 C 0 4.2, 0 3, 1 2.5z"/></svg>
<svg style="left:639px;top:322.0px;width:12px;height:22px" viewBox="0 12 22"><path fill="#7a7a7a" d="M0.9 7.9L6 2.9 11.1 7.9zM0.9 15.2L6 20.2 11.1 15.2z"/></svg>
<div class="inp" style="left:675px;top:308px;width:125px;height:50px"></div>
<div class="t" style="left:690px;top:324.3px;font-size:18px;color:#222">default</div>
<svg style="left:772px;top:329.0px;width:14px;height:8px" viewBox="0 14 8"><path fill="#757575" d="M0.5 1L7 7.5 13.5 1z"/></svg>
<div class="inp" style="left:815px;top:308px;width:50px;height:50px"></div>
<div class="a" style="left:825px;top:317.5px;width:31px;height:31px;border-radius:5px;background:#f44336"></div>
<div class="inp" style="left:880px;top:308px;width:100px;height:50px"></div>
<div class="t" style="left:894px;top:324.3px;font-size:18px;color:#222">&#176;C</div>
<svg style="left:891px;top:342.5px;width:46px;height:5px" viewBox="0 46 5"><path fill="#fbc02d" d="M1 2.5 C 6 0.8, 25 0.8, 45 3.6 C 30 3, 10 3.2, 2 4.2 C 0 4.2, 0 3, 1 2.5z"/></svg>
<div class="inp" style="left:996px;top:308px;width:73px;height:50px"></div>
<div class="t" style="left:1011px;top:324.3px;font-size:18px;color:#222">0</div>
<svg style="left:1048px;top:322.0px;width:12px;height:22px" viewBox="0 12 22"><path fill="#7a7a7a" d="M0.9 7.9L6 2.9 11.1 7.9zM0.9 15.2L6 20.2 11.1 15.2z"/></svg>
<svg style="left:1095px;top:318.0px;width:30px;height:30px" viewBox="0 0 24 24"><path fill="#8a8a8a" d="M19.14 12.94c.04-.3.06-.61.06-.94 0-.32-.02-.64-.07-.94l2.03-1.58c.18-.14.23-.41.12-.61l-1.92-3.32c-.12-.22-.37-.29-.59-.22l-2.39.96c-.5-.38-1.03-.7-1.62-.94l-.36-2.54c-.04-.24-.24-.41-.48-.41h-3.84c-.24 0-.43.17-.47.41l-.36 2.54c-.59.24-1.13.57-1.62.94l-2.39-.96c-.22-.08-.47 0-.59.22L2.74 8.87c-.12.21-.08.47.12.61l2.03 1.58c-.05.3-.09.63-.09.94s.02.64.07.94l-2.03 1.58c-.18.14-.23.41-.12.61l1.92 3.32c.12.22.37.29.59.22l2.39-.96c.5.38 1.03.7 1.62.94l.36 2.54c.05.24.24.41.48.41h3.84c.24 0 .44-.17.47-.41l.36-2.54c.59-.24 1.13-.56 1.62-.94l2.39.96c.22.08.47 0 .59-.22l1.92-3.32c.12-.22.07-.47-.12-.61l-2.01-1.58zM12 15.6c-1.98 0-3.6-1.62-3.6-3.6s1.62-3.6 3.6-3.6 3.6 1.62 3.6 3.6-1.62 3.6-3.6 3.6z"/></svg>
<svg style="left:1145px;top:318.0px;width:30px;height:30px" viewBox="0 0 24 24"><path fill="#8a8a8a" d="M6 19c0 1.1.9 2 2 2h8c1.1 0 2-.9 2-2V7H6v12zM19 4h-3.5l-1-1h-5l-1 1H5v2h14V4z"/></svg>
<div class="inp" style="left:57px;top:374px;width:294px;height:50px"></div>
<div class="t" style="left:72px;top:390.3px;font-size:18px;color:#222">Constant</div>
<svg style="left:323px;top:395.0px;width:14px;height:8px" viewBox="0 14 8"><path fill="#757575" d="M0.5 1L7 7.5 13.5 1z"/></svg>
<div class="inp" style="left:366px;top:374px;width:294px;height:50px"></div>
<div class="t" style="left:381px;top:390.3px;font-size:18px;color:#222">18</div>
<svg style="left:375px;top:408.5px;width:46px;height:5px" viewBox="0 46 5"><path fill="#fbc02d" d="M1 2.5 C 6 0.8, 25 0.8, 45 3.6 C 30 3, 10 3.2, 2 4.2 C 0 4.2, 0 3, 1 2.5z"/></svg>
<svg style="left:639px;top:388.0px;width:12px;height:22px" viewBox="0 12 22"><path fill="#7a7a7a" d="M0.9 7.9L6 2.9 11.1 7.9zM0.9 15.2L6 20.2 11.1 15.2z"/></svg>
<div class="inp" style="left:675px;top:374px;width:125px;height:50px"></div>
<div class="t" style="left:690px;top:390.3px;font-size:18px;color:#222">default</div>
<svg style="left:772px;top:395.0px;width:14px;height:8px" viewBox="0 14 8"><path fill="#757575" d="M0.5 1L7 7.5 13.5 1z"/></svg>
<div class="inp" style="left:815px;top:374px;width:50px;height:50px"></div>
<div class="a" style="left:825px;top:383.5px;width:31px;height:31px;border-radius:5px;background:#0288d1"></div>
<div class="inp" style="left:880px;top:374px;width:100px;height:50px"></div>
<div class="t" style="left:894px;top:390.3px;font-size:18px;color:#222">&#176;C</div>
<svg style="left:891px;top:408.5px;width:46px;height:5px" viewBox="0 46 5"><path fill="#fbc02d" d="M1 2.5 C 6 0.8, 25 0.8, 45 3.6 C 30 3, 10 3.2, 2 4.2 C 0 4.2, 0 3, 1 2.5z"/></svg>
<div class="inp" style="left:996px;top:374px;width:73px;height:50px"></div>
<div class="t" style="left:1011px;top:390.3px;font-size:18px;color:#222">0</div>
<svg style="left:1048px;top:388.0px;width:12px;height:22px" viewBox="0 12 22"><path fill="#7a7a7a" d="M0.9 7.9L6 2.9 11.1 7.9zM0.9 15.2L6 20.2 11.1 15.2z"/></svg>
<svg style="left:1095px;top:384.0px;width:30px;height:30px" viewBox="0 0 24 24"><path fill="#8a8a8a" d="M19.14 12.94c.04-.3.06-.61.06-.94 0-.32-.02-.64-.07-.94l2.03-1.58c.18-.14.23-.41.12-.61l-1.92-3.32c-.12-.22-.37-.29-.59-.22l-2.39.96c-.5-.38-1.03-.7-1.62-.94l-.36-2.54c-.04-.24-.24-.41-.48-.41h-3.84c-.24 0-.43.17-.47.41l-.36 2.54c-.59.24-1.13.57-1.62.94l-2.39-.96c-.22-.08-.47 0-.59.22L2.74 8.87c-.12.21-.08.47.12.61l2.03 1.58c-.05.3-.09.63-.09.94s.02.64.07.94l-2.03 1.58c-.18.14-.23.41-.12.61l1.92 3.32c.12.22.37.29.59.22l2.39-.96c.5.38 1.03.7 1.62.94l.36 2.54c.05.24.24.41.48.41h3.84c.24 0 .44-.17.47-.41l.36-2.54c.59-.24 1.13-.56 1.62-.94l2.39.96c.22.08.47 0 .59-.22l1.92-3.32c.12-.22.07-.47-.12-.61l-2.01-1.58zM12 15.6c-1.98 0-3.6-1.62-3.6-3.6s1.62-3.6 3.6-3.6 3.6 1.62 3.6 3.6-1.62 3.6-3.6 3.6z"/></svg>
<svg style="left:1145px;top:384.0px;width:30px;height:30px" viewBox="0 0 24 24"><path fill="#8a8a8a" d="M6 19c0 1.1.9 2 2 2h8c1.1 0 2-.9 2-2V7H6v12zM19 4h-3.5l-1-1h-5l-1 1H5v2h14V4z"/></svg>
<div class="card" style="left:41px;top:460px;width:156px;height:44px;border-radius:4px;"></div>
<div class="t" style="left:61px;top:473.8px;font-size:18px;color:#00695c;letter-spacing:0.35px;-webkit-text-stroke:0.5px currentColor;">Add threshold</div>
<div class="a" style="left:13px;top:160px;width:1216px;height:372px;border:3px solid #fcc63a;border-radius:12px;box-shadow:0 0 8px 2px rgba(252,198,58,0.35)"></div>
<div class="card" style="left:20px;top:547px;width:1202px;height:205px;border-radius:8px;"></div>
<div class="t" style="left:41px;top:569.7px;font-size:20px;color:#111;letter-spacing:0;-webkit-text-stroke:0.5px currentColor;">Chart</div>
<div class="card" style="left:42px;top:611px;width:1159px;height:72px;border-radius:8px;"></div>
<div class="a" style="left:62px;top:638px;width:45px;height:18px;border-radius:9px;background:#e0e0e0"></div>
<div class="a" style="left:62px;top:634px;width:25px;height:25px;border-radius:50%;background:#616161;box-shadow:0 1px 3px rgba(0,0,0,0.3)"></div>
<div class="a" style="left:68px;top:645.5px;width:13px;height:2.5px;background:#fff"></div>
<div class="t" style="left:127px;top:637.1px;font-size:20px;color:#222">Grid</div>
<div class="card" style="left:42px;top:703px;width:1159px;height:149px;border-radius:8px;"></div>
<div class="a" style="left:1222px;top:272px;width:4px;height:201px;border-radius:2px;background:#c8c8c8"></div>
</div>

<!--CALLOUT-->
<div class="a" style="left:279px;top:626px;width:376px;height:107px;background:#fdf0e1 radial-gradient(circle, rgba(120,100,80,0.06) 0.7px, transparent 1.1px) 0 0/11px 11px;border:3px solid #fcc63a;border-radius:10px;box-shadow:0 0 4px rgba(252,198,58,0.3)"></div>
<div class="t" style="left:287.3px;top:632px;font-size:27px;color:#000;line-height:33px;letter-spacing:0.37px">Set thresholds:</div>
<div class="t" style="left:287.3px;top:665px;font-size:27px;color:#000;line-height:33px;letter-spacing:0.37px">&nbsp;- First: 30 &#176;C , color: red</div>
<div class="t" style="left:287.3px;top:698px;font-size:27px;color:#000;line-height:33px;letter-spacing:0.37px">&nbsp;- Second: 18 &#176;C , color: blue</div>
<div class="a" style="left:303px;top:594px;width:30px;height:36px;background:#fff;border:3px solid #fcc63a;border-radius:9px"></div>
<div class="t" style="left:303px;top:598px;width:30px;text-align:center;font-size:27px;color:#000;line-height:30px">7</div>
<div class="a" style="left:655px;top:674px;width:12px;height:3px;background:#fcc63a"></div>
<div class="a" style="left:672px;top:674px;width:12px;height:3px;background:#fcc63a"></div>
<div class="a" style="left:680.5px;top:670.5px;width:10px;height:10px;border-radius:50%;background:#fcc63a"></div>


</body></html>
